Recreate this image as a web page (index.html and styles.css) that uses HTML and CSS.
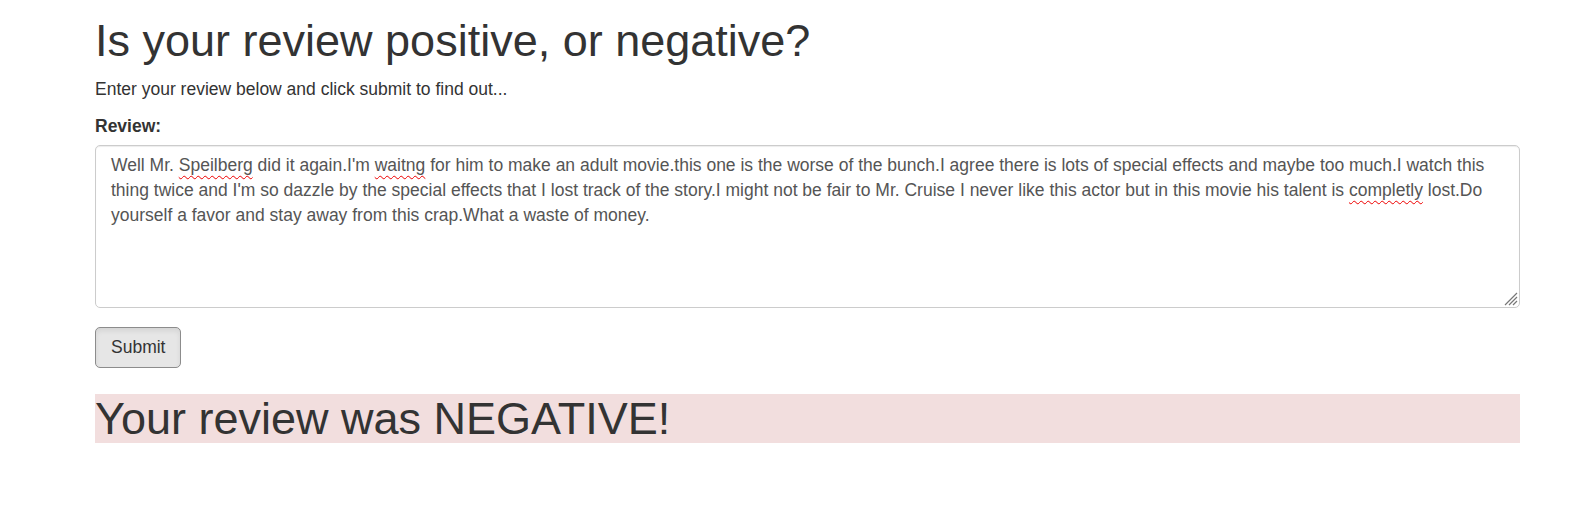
FILE: index.html
```html
<!DOCTYPE html>
<html lang="en">
<head>
<meta charset="utf-8">
<title>Review Sentiment</title>
<link rel="stylesheet" href="styles.css">
</head>
<body>
<div class="container">
  <h1 class="title">Is your review positive, or negative?</h1>
  <p class="lead-text">Enter your review below and click submit to find out...</p>
  <form class="review-form">
    <div class="form-group">
      <label class="field-label">Review:</label>
      <div class="review-box" role="textbox" aria-multiline="true">Well Mr. <span class="misspelled">Speilberg</span> did it again.I'm <span class="misspelled">waitng</span> for him to make an adult movie.this one is the worse of the bunch.I agree there is lots of special effects and maybe too much.I watch this thing twice and I'm so dazzle by the special effects that I lost track of the story.I might not be fair to Mr. Cruise I never like this actor but in this movie his talent is <span class="misspelled">completly</span> lost.Do yourself a favor and stay away from this crap.What a waste of money.<svg class="grip" width="16" height="16" viewBox="0 0 16 16"><path d="M15 3 L3 15 M15 7 L7 15 M15 11 L11 15" stroke="#777" stroke-width="1.2" fill="none"/></svg></div>
    </div>
    <button type="button" class="btn">Submit</button>
  </form>
  <h1 class="result">Your review was NEGATIVE!</h1>
</div>
</body>
</html>
```

FILE: styles.css
```css
html, body {
  margin: 0;
  padding: 0;
  background: #fff;
}
body {
  font-family: "Liberation Sans", Arial, sans-serif;
  font-size: 17.5px;
  line-height: 25px;
  color: #333;
}
.container {
  width: 1425px;
  margin-left: 95px;
  padding-top: 16px;
}
.title {
  margin: 0 0 11.5px;
  font-size: 45px;
  line-height: 49.5px;
  font-weight: 500;
}
.lead-text {
  margin: 0 0 11.5px;
}
.form-group {
  margin-bottom: 19px;
}
.field-label {
  display: block;
  font-weight: bold;
  margin-bottom: 6px;
}
.review-box {
  position: relative;
  box-sizing: border-box;
  height: 163px;
  padding: 7.5px 15px;
  border: 1px solid #ccc;
  border-radius: 5px;
  color: #555;
  background: #fff;
  box-shadow: inset 0 1px 1px rgba(0,0,0,.075);
}
.misspelled {
  text-decoration: underline wavy #e00;
  text-decoration-thickness: 1px;
  text-underline-offset: 4px;
  text-decoration-skip-ink: none;
}
.grip {
  position: absolute;
  right: 1px;
  bottom: 1px;
}
.btn {
  display: block;
  box-sizing: border-box;
  height: 41px;
  padding: 7px 15px;
  font-family: inherit;
  font-size: 17.5px;
  line-height: 25px;
  color: #333;
  background: #e6e6e6;
  border: 1px solid #8c8c8c;
  border-radius: 5px;
  box-shadow: inset 0 3px 5px rgba(0,0,0,.08);
}
.result {
  margin: 26px 0 0;
  font-size: 45px;
  line-height: 49.5px;
  font-weight: 500;
  background: #f2dede;
}
```
